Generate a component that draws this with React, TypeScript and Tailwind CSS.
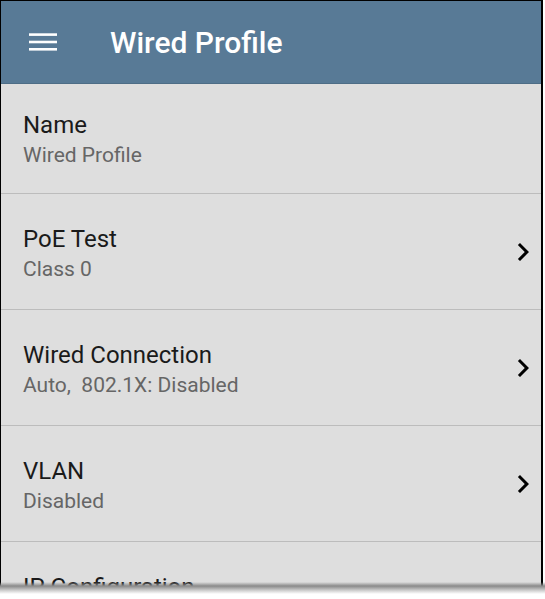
import { ReactNode } from 'react';

type Row = {
  title: string;
  value: string;
  nav?: boolean;
};

const rows: Row[] = [
  { title: 'PoE Test', value: 'Class 0', nav: true },
  { title: 'Wired Connection', value: 'Auto,  802.1X: Disabled', nav: true },
  { title: 'VLAN', value: 'Disabled', nav: true },
  { title: 'IP Configuration', value: 'DHCP', nav: true },
];

function ChevronRight() {
  return (
    <svg viewBox="0 0 24 24" className="w-9 h-9 shrink-0 self-center" fill="#000">
      <path d="M10 6L8.59 7.41 13.17 12l-4.58 4.59L10 18l6-6z" />
    </svg>
  );
}

function MenuIcon() {
  return (
    <svg width="28" height="18" viewBox="0 0 28 18" fill="#fff">
      <rect x="0" y="0.3" width="28" height="2.6" />
      <rect x="0" y="7.7" width="28" height="2.6" />
      <rect x="0" y="15" width="28" height="2.6" />
    </svg>
  );
}

function Item({ title, value, nav, first }: Row & { first?: boolean }): ReactNode {
  return (
    <div
      className={
        'flex border-b border-[#bcbcbc] ' +
        (first ? 'h-[110px]' : 'h-[116px]')
      }
    >
      <div className={'flex-1 pl-[22px] ' + (first ? 'pt-[26px]' : 'pt-[30px]')}>
        <div className="text-[24px] leading-[30px] text-[#1a1a1a]">{title}</div>
        <div className="mt-[2px] text-[21px] leading-[26px] text-[#666666] whitespace-pre">{value}</div>
      </div>
      {nav && <ChevronRight />}
    </div>
  );
}

export default function App() {
  return (
    <div className="relative w-[545px] h-[599px] overflow-hidden bg-white font-['Roboto',sans-serif]">
      <div className="w-[543px] h-[599px] border-t border-l border-r-2 border-black bg-[#dedede]">
        <div className="h-[83px] bg-[#587a96] flex items-start border-b border-[#4e6d86]">
          <div className="pl-[28px] pt-[32px] flex">
            <MenuIcon />
          </div>
          <div className="pl-[53px] pt-[27px] text-[30px] font-medium text-white leading-[30px]">
            Wired Profile
          </div>
        </div>
        <Item first title="Name" value="Wired Profile" />
        {rows.map(r => (
          <Item key={r.title} {...r} />
        ))}
      </div>
      <div className="absolute left-0 right-0 top-[582px] h-[17px] bg-[linear-gradient(to_bottom,rgba(140,140,140,0)_0px,#8a8a8a_4px,#c8c8c8_8px,#ffffff_12px,#ffffff_17px)]" />
    </div>
  );
}
